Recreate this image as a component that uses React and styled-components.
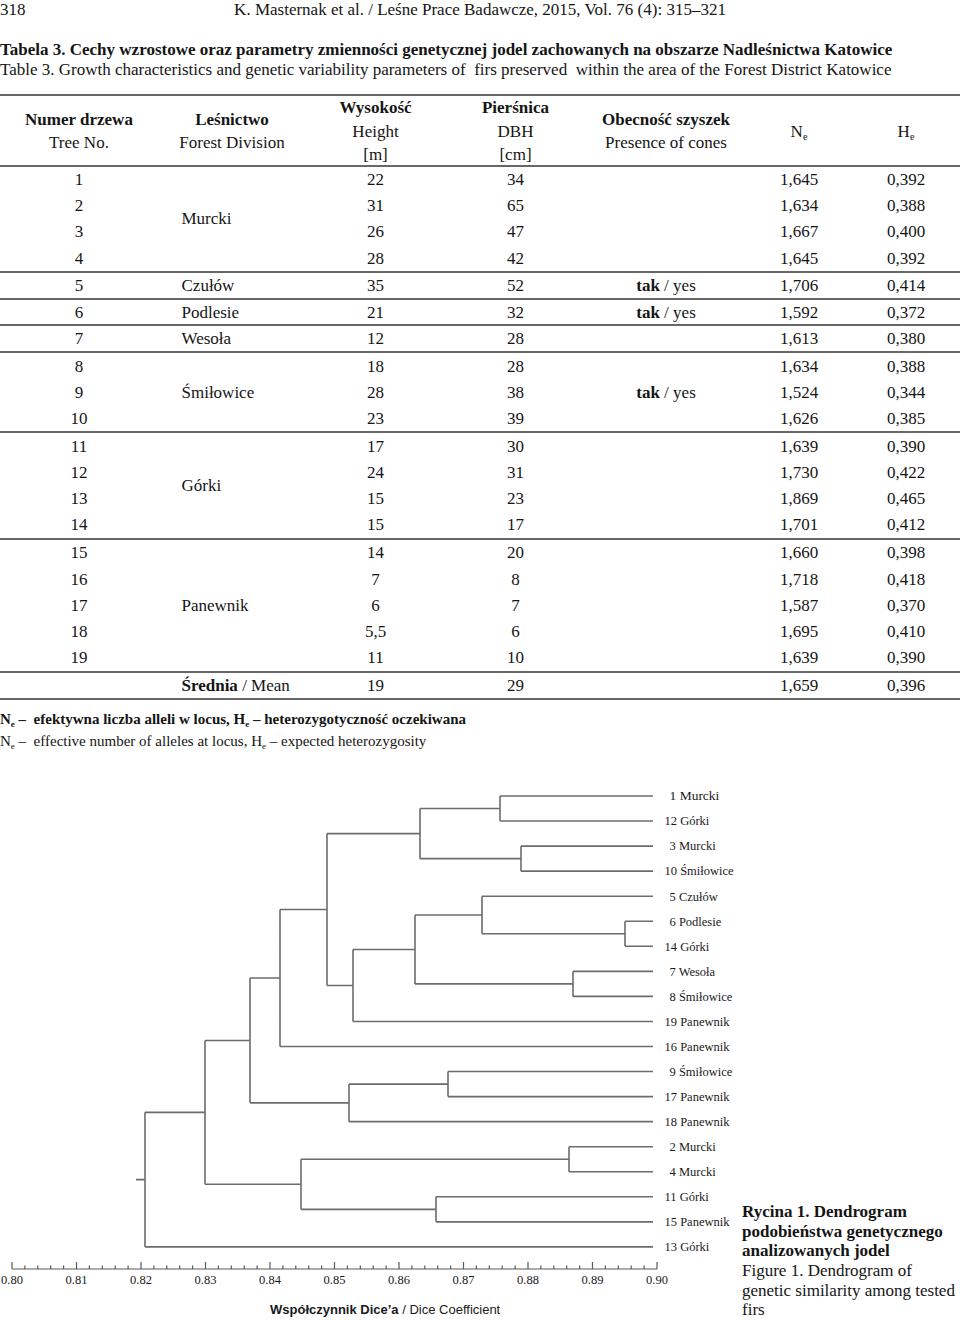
import React from "react";
import styled, { createGlobalStyle } from "styled-components";

const GlobalStyle = createGlobalStyle`
  html, body { margin: 0; padding: 0; background: #fff; }
  body {
    font-family: "Liberation Serif", "Times New Roman", serif;
    color: #151515;
  }
`;

const COLS = "158px 148px 139px 141px 160px 106px 108px";
const ROW_H = 26.667;
const RULE = "#676767";

const Page = styled.div`
  width: 960px;
  height: 1320px;
  overflow: hidden;
  font-size: 17px;
`;

const RunningHead = styled.header`
  display: grid;
  grid-template-columns: 1fr auto 1fr;
  height: 16px;
  line-height: 19px;
  white-space: nowrap;
`;

const TitleBlock = styled.div`
  margin-top: 24px;
  line-height: 20px;
  white-space: nowrap;
`;

const TitleLine = styled.div`
  font-weight: ${(p) => (p.$bold ? "bold" : "normal")};
`;

const Table = styled.div`
  margin-top: 14px;
  border-top: 2.5px solid ${RULE};
`;

const HeaderRow = styled.div`
  display: grid;
  grid-template-columns: ${COLS};
  height: 70.5px;
  box-sizing: border-box;
  border-bottom: 2px solid ${RULE};
  align-items: center;
  line-height: 23.5px;
`;

const HeadCell = styled.div`
  text-align: center;
`;

const HeadLine = styled.div`
  font-weight: ${(p) => (p.$bold ? "bold" : "normal")};
  white-space: nowrap;
`;

const Group = styled.div`
  display: grid;
  grid-template-columns: ${COLS};
  grid-template-rows: repeat(${(p) => p.$rows}, 1fr);
  height: ${(p) => p.$rows * ROW_H}px;
  box-sizing: border-box;
  border-bottom: 2px solid ${RULE};
`;

const Cell = styled.div`
  grid-column: ${(p) => p.$col};
  grid-row: ${(p) => p.$row} / span ${(p) => p.$span || 1};
  display: flex;
  align-items: center;
  justify-content: ${(p) => (p.$left ? "flex-start" : "center")};
  padding-left: ${(p) => (p.$left ? "23.5px" : "0")};
  line-height: 1;
  white-space: nowrap;
`;

const Strong = styled.b`
  font-weight: bold;
`;

const Sub = styled.sub`
  font-size: 0.6em;
  vertical-align: -0.3em;
  line-height: 0;
`;

const Notes = styled.div`
  margin-top: 8px;
  font-size: 15px;
  line-height: 22px;
  white-space: nowrap;
`;

const NoteLine = styled.div`
  font-weight: ${(p) => (p.$bold ? "bold" : "normal")};
`;

const Figure = styled.figure`
  margin: 18px 0 0;
  display: grid;
  grid-template-columns: 742px 1fr;
  align-items: end;
`;

const Chart = styled.svg`
  display: block;
  width: 742px;
  height: 550px;
`;

const Branch = styled.path`
  fill: none;
  stroke: #6c6c6c;
  stroke-width: 1.6;
`;

const AxisPath = styled.path`
  fill: none;
  stroke: #5a5a5a;
  stroke-width: 1.2;
`;

const LeafLabel = styled.text`
  font-family: "Liberation Serif", "Times New Roman", serif;
  font-size: ${(p) => p.$size}px;
  fill: #1a1a1a;
`;

const TickLabel = styled.text`
  font-family: "Liberation Serif", "Times New Roman", serif;
  font-size: 12.5px;
  fill: #1a1a1a;
`;

const AxisTitle = styled.text`
  font-family: "Liberation Sans", Arial, sans-serif;
  font-size: 13px;
  fill: #1a1a1a;
`;

const FigCaption = styled.figcaption`
  font-size: 17px;
  line-height: 19.6px;
  padding-right: 2px;
`;

const CaptionPl = styled.div`
  font-weight: bold;
`;

/* ---------- data ---------- */

const rows = [
  [1, "22", "34", "1,645", "0,392"],
  [2, "31", "65", "1,634", "0,388"],
  [3, "26", "47", "1,667", "0,400"],
  [4, "28", "42", "1,645", "0,392"],
  [5, "35", "52", "1,706", "0,414"],
  [6, "21", "32", "1,592", "0,372"],
  [7, "12", "28", "1,613", "0,380"],
  [8, "18", "28", "1,634", "0,388"],
  [9, "28", "38", "1,524", "0,344"],
  [10, "23", "39", "1,626", "0,385"],
  [11, "17", "30", "1,639", "0,390"],
  [12, "24", "31", "1,730", "0,422"],
  [13, "15", "23", "1,869", "0,465"],
  [14, "15", "17", "1,701", "0,412"],
  [15, "14", "20", "1,660", "0,398"],
  [16, "7", "8", "1,718", "0,418"],
  [17, "6", "7", "1,587", "0,370"],
  [18, "5,5", "6", "1,695", "0,410"],
  [19, "11", "10", "1,639", "0,390"],
];

const groups = [
  { division: "Murcki", from: 0, n: 4 },
  { division: "Czułów", from: 4, n: 1, cones: true },
  { division: "Podlesie", from: 5, n: 1, cones: true },
  { division: "Wesoła", from: 6, n: 1 },
  { division: "Śmiłowice", from: 7, n: 3, cones: true },
  { division: "Górki", from: 10, n: 4 },
  { division: "Panewnik", from: 14, n: 5 },
];

const leaves = [
  "1 Murcki",
  "12 Górki",
  "3 Murcki",
  "10 Śmiłowice",
  "5 Czułów",
  "6 Podlesie",
  "14 Górki",
  "7 Wesoła",
  "8 Śmiłowice",
  "19 Panewnik",
  "16 Panewnik",
  "9 Śmiłowice",
  "17 Panewnik",
  "18 Panewnik",
  "2 Murcki",
  "4 Murcki",
  "11 Górki",
  "15 Panewnik",
  "13 Górki",
];

const J = (x, a, b) => ({ x, a, b });

const tree = J(
  145,
  J(
    205,
    J(
      250,
      J(
        280,
        J(
          327,
          J(420, J(500, 0, 1), J(521, 2, 3)),
          J(353, J(415, J(482, 4, J(625, 5, 6)), J(573, 7, 8)), 9)
        ),
        10
      ),
      J(349, J(448, 11, 12), 13)
    ),
    J(301, J(569, 14, 15), J(436, 16, 17))
  ),
  18
);

const LEAF_X = 653;
const LEAF_Y0 = 796;
const LEAF_STEP = 25.05;
const leafY = (i) => LEAF_Y0 + i * LEAF_STEP;
const axisX = (v) => 12 + (v - 0.8) * 6450;

function layoutTree(node, segs) {
  if (typeof node === "number") {
    return { x: LEAF_X, y: leafY(node) };
  }
  const a = layoutTree(node.a, segs);
  const b = layoutTree(node.b, segs);
  segs.push(`M${node.x} ${a.y}H${a.x}`);
  segs.push(`M${node.x} ${b.y}H${b.x}`);
  segs.push(`M${node.x} ${a.y}V${b.y}`);
  return { x: node.x, y: (a.y + b.y) / 2 };
}

function Dendrogram() {
  const segs = [];
  const root = layoutTree(tree, segs);
  segs.push(`M${root.x - 9} ${root.y}H${root.x}`);

  const AXIS_Y = 1269;
  const ticks = [];
  for (let i = 0; i <= 50; i++) {
    const x = axisX(0.8 + i * 0.002);
    const major = i % 5 === 0;
    ticks.push(`M${x} ${AXIS_Y}V${AXIS_Y - (major ? 7 : 3.5)}`);
  }
  const labels = [];
  for (let i = 0; i <= 10; i++) {
    const v = 0.8 + i * 0.01;
    labels.push({ x: axisX(v), t: v.toFixed(2) });
  }

  return (
    <Chart viewBox="0 770 742 550">
      <Branch d={segs.join("")} />
      {leaves.map((name, i) => {
        const single = /^\d\s/.test(name);
        return (
          <LeafLabel
            key={name}
            $size={i === 0 ? 13.5 : 12.5}
            x={single ? 669.5 : 664.5}
            y={leafY(i) + 4.3}
          >
            {name}
          </LeafLabel>
        );
      })}
      <AxisPath d={`M${axisX(0.8)} ${AXIS_Y}H${axisX(0.9)}${ticks.join("")}`} />
      {labels.map((l) => (
        <TickLabel key={l.t} x={l.x} y={1284} textAnchor="middle">
          {l.t}
        </TickLabel>
      ))}
      <AxisTitle x={270} y={1314}>
        <tspan fontWeight="bold">Współczynnik Dice’a</tspan>
        <tspan> / Dice Coefficient</tspan>
      </AxisTitle>
    </Chart>
  );
}

function TableGroup({ g }) {
  const cells = [];
  for (let i = 0; i < g.n; i++) {
    const r = rows[g.from + i];
    const row = i + 1;
    cells.push(
      <Cell key={`n${i}`} $col={1} $row={row}>{r[0]}</Cell>,
      <Cell key={`h${i}`} $col={3} $row={row}>{r[1]}</Cell>,
      <Cell key={`d${i}`} $col={4} $row={row}>{r[2]}</Cell>,
      <Cell key={`ne${i}`} $col={6} $row={row}>{r[3]}</Cell>,
      <Cell key={`he${i}`} $col={7} $row={row}>{r[4]}</Cell>
    );
  }
  return (
    <Group $rows={g.n}>
      <Cell $col={2} $row={1} $span={g.n} $left>
        {g.division}
      </Cell>
      {g.cones && (
        <Cell $col={5} $row={1} $span={g.n}>
          <Strong>tak</Strong>&nbsp;/ yes
        </Cell>
      )}
      {cells}
    </Group>
  );
}

export default function App() {
  return (
    <Page>
      <GlobalStyle />
      <RunningHead>
        <span>318</span>
        <span>K. Masternak et al. / Leśne Prace Badawcze, 2015, Vol. 76 (4): 315–321</span>
        <span />
      </RunningHead>

      <TitleBlock>
        <TitleLine $bold>
          Tabela 3. Cechy wzrostowe oraz parametry zmienności genetycznej jodel zachowanych na obszarze Nadleśnictwa Katowice
        </TitleLine>
        <TitleLine>
          Table 3. Growth characteristics and genetic variability parameters of&nbsp; firs preserved&nbsp; within the area of the Forest District Katowice
        </TitleLine>
      </TitleBlock>

      <Table>
        <HeaderRow>
          <HeadCell>
            <HeadLine $bold>Numer drzewa</HeadLine>
            <HeadLine>Tree No.</HeadLine>
          </HeadCell>
          <HeadCell>
            <HeadLine $bold>Leśnictwo</HeadLine>
            <HeadLine>Forest Division</HeadLine>
          </HeadCell>
          <HeadCell>
            <HeadLine $bold>Wysokość</HeadLine>
            <HeadLine>Height</HeadLine>
            <HeadLine>[m]</HeadLine>
          </HeadCell>
          <HeadCell>
            <HeadLine $bold>Pierśnica</HeadLine>
            <HeadLine>DBH</HeadLine>
            <HeadLine>[cm]</HeadLine>
          </HeadCell>
          <HeadCell>
            <HeadLine $bold>Obecność szyszek</HeadLine>
            <HeadLine>Presence of cones</HeadLine>
          </HeadCell>
          <HeadCell>
            <HeadLine>
              N<Sub>e</Sub>
            </HeadLine>
          </HeadCell>
          <HeadCell>
            <HeadLine>
              H<Sub>e</Sub>
            </HeadLine>
          </HeadCell>
        </HeaderRow>

        {groups.map((g) => (
          <TableGroup key={g.division} g={g} />
        ))}

        <Group $rows={1}>
          <Cell $col={2} $row={1} $left>
            <Strong>Średnia</Strong>&nbsp;/ Mean
          </Cell>
          <Cell $col={3} $row={1}>19</Cell>
          <Cell $col={4} $row={1}>29</Cell>
          <Cell $col={6} $row={1}>1,659</Cell>
          <Cell $col={7} $row={1}>0,396</Cell>
        </Group>
      </Table>

      <Notes>
        <NoteLine $bold>
          N<Sub>e</Sub> –&nbsp; efektywna liczba alleli w locus, H<Sub>e</Sub> – heterozygotyczność oczekiwana
        </NoteLine>
        <NoteLine>
          N<Sub>e</Sub> –&nbsp; effective number of alleles at locus, H<Sub>e</Sub> – expected heterozygosity
        </NoteLine>
      </Notes>

      <Figure>
        <Dendrogram />
        <FigCaption>
          <CaptionPl>Rycina 1. Dendrogram podobieństwa genetycznego analizowanych jodel</CaptionPl>
          <div>Figure 1. Dendrogram of genetic similarity among tested firs</div>
        </FigCaption>
      </Figure>
    </Page>
  );
}
